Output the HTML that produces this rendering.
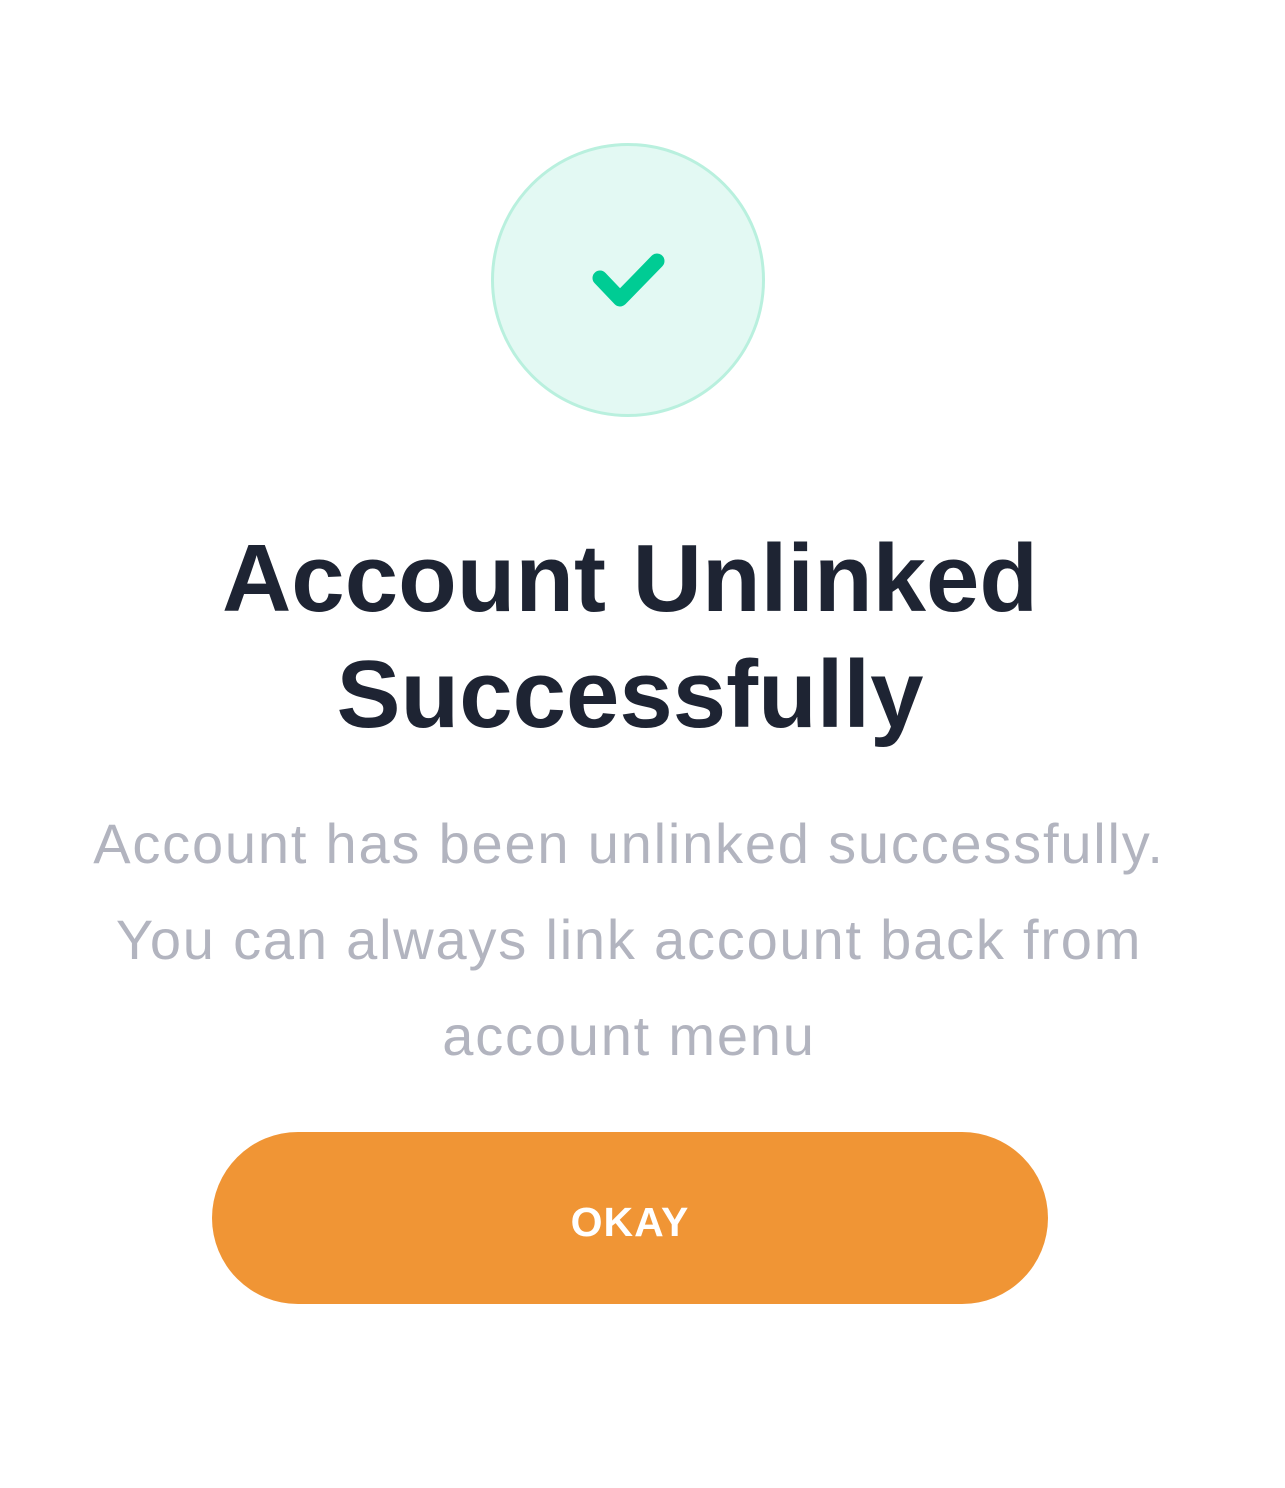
<!DOCTYPE html>
<html><head><meta charset="utf-8"><style>
html,body{margin:0;padding:0;background:#fff;width:1285px;height:1488px;overflow:hidden;font-family:"Liberation Sans",sans-serif}
.circle{position:absolute;left:491px;top:143px;width:268px;height:268px;border-radius:50%;background:#e3f9f3;border:3px solid #b9f0de}
h1{position:absolute;left:0;width:1260px;top:521px;margin:0;text-align:center;font-size:96px;line-height:116px;font-weight:bold;color:#1e2433}
p{position:absolute;left:0;width:1258px;top:796px;margin:0;text-align:center;font-size:56px;line-height:96px;color:#b2b4bf;letter-spacing:1.8px}
.btn{position:absolute;left:212px;top:1136px;width:836px;height:172px;border-radius:86px;background:#f09535;color:#fff;font-weight:bold;font-size:41px;line-height:172px;text-align:center;letter-spacing:1px}
.bg{position:absolute;left:212px;top:1132px;width:836px;height:172px;border-radius:86px;background:#f09535}
</style></head><body>
<div class="circle"></div>
<svg style="position:absolute;left:0;top:0" width="1285" height="500"><path d="M600 278 L620 299 L657 261" fill="none" stroke="#00cc94" stroke-width="15" stroke-linecap="round" stroke-linejoin="round"/></svg>
<h1>Account Unlinked<br>Successfully</h1>
<p>Account has been unlinked successfully.<br>You can always link account back from<br>account menu</p>
<div class="bg"></div>
<div class="btn" style="background:transparent">OKAY</div>
</body></html>
